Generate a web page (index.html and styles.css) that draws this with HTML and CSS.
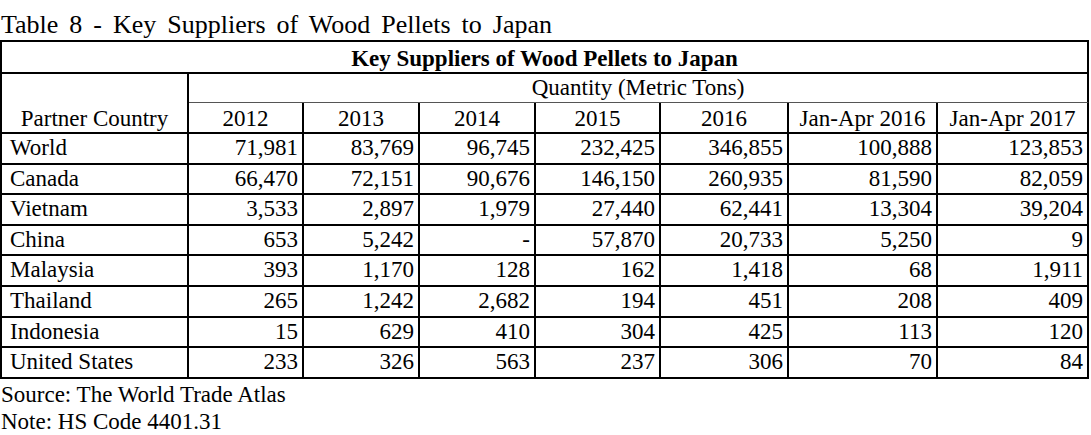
FILE: index.html
```html
<!DOCTYPE html>
<html>
<head>
<meta charset="utf-8">
<title>Table 8 - Key Suppliers of Wood Pellets to Japan</title>
<link rel="stylesheet" href="styles.css">
</head>
<body>
<div class="caption">Table 8 - Key Suppliers of Wood Pellets to Japan</div>
<table class="data">
  <colgroup>
    <col class="c1"><col class="c2"><col class="c3"><col class="c4"><col class="c5"><col class="c6"><col class="c7"><col class="c8">
  </colgroup>
  <tr class="r-title"><th colspan="8" class="title">Key Suppliers of Wood Pellets to Japan</th></tr>
  <tr class="r-qty"><td rowspan="2" class="partner">Partner Country</td><td colspan="7" class="qty">Quantity (Metric Tons)</td></tr>
  <tr class="r-years"><td class="yr">2012</td><td class="yr">2013</td><td class="yr">2014</td><td class="yr">2015</td><td class="yr">2016</td><td class="yr">Jan-Apr 2016</td><td class="yr">Jan-Apr 2017</td></tr>
  <tr class="r-data"><td class="name">World</td><td>71,981</td><td>83,769</td><td>96,745</td><td>232,425</td><td>346,855</td><td>100,888</td><td>123,853</td></tr>
  <tr class="r-data"><td class="name">Canada</td><td>66,470</td><td>72,151</td><td>90,676</td><td>146,150</td><td>260,935</td><td>81,590</td><td>82,059</td></tr>
  <tr class="r-data"><td class="name">Vietnam</td><td>3,533</td><td>2,897</td><td>1,979</td><td>27,440</td><td>62,441</td><td>13,304</td><td>39,204</td></tr>
  <tr class="r-data"><td class="name">China</td><td>653</td><td>5,242</td><td>-</td><td>57,870</td><td>20,733</td><td>5,250</td><td>9</td></tr>
  <tr class="r-data"><td class="name">Malaysia</td><td>393</td><td>1,170</td><td>128</td><td>162</td><td>1,418</td><td>68</td><td>1,911</td></tr>
  <tr class="r-data"><td class="name">Thailand</td><td>265</td><td>1,242</td><td>2,682</td><td>194</td><td>451</td><td>208</td><td>409</td></tr>
  <tr class="r-data"><td class="name">Indonesia</td><td>15</td><td>629</td><td>410</td><td>304</td><td>425</td><td>113</td><td>120</td></tr>
  <tr class="r-data"><td class="name">United States</td><td>233</td><td>326</td><td>563</td><td>237</td><td>306</td><td>70</td><td>84</td></tr>
</table>
<div class="notes">
  <div class="note">Source: The World Trade Atlas</div>
  <div class="note">Note: HS Code 4401.31</div>
</div>
</body>
</html>
```
FILE: styles.css
```css
html, body {
  margin: 0;
  padding: 0;
  background: #ffffff;
}
body {
  font-family: "Liberation Serif", "Times New Roman", serif;
  color: #000000;
  width: 1091px;
}
.caption {
  font-size: 26px;
  line-height: 29px;
  padding-top: 10px;
  padding-left: 1px;
  height: 30px;
  word-spacing: 4.5px;
  white-space: nowrap;
}
.data {
  border-collapse: separate;
  border-spacing: 0;
  table-layout: fixed;
  width: 1089px;
  border-top: 2px solid #000;
  border-left: 2px solid #000;
  font-size: 23px;
}
.c1 { width: 187px; }
.c2 { width: 115px; }
.c3 { width: 116px; }
.c4 { width: 116px; }
.c5 { width: 125px; }
.c6 { width: 128px; }
.c7 { width: 149px; }
.c8 { width: 151px; }
.data th,
.data td {
  box-sizing: border-box;
  border-right: 2px solid #000;
  border-bottom: 2px solid #000;
  padding: 0 4px 0 0;
  white-space: nowrap;
  overflow: hidden;
  text-align: right;
  font-weight: normal;
}
.r-title th {
  height: 32px;
  line-height: 27px;
  padding: 3px 0 0 0;
  text-align: center;
  font-weight: bold;
  vertical-align: top;
}
.r-qty td {
  height: 29px;
  line-height: 28px;
}
.data td.qty {
  text-align: center;
  padding: 0;
  border-bottom: 1px solid #555;
}
.data td.partner {
  text-align: center;
  vertical-align: bottom;
  padding: 0;
  line-height: 26px;
}
.r-years td {
  height: 31px;
  line-height: 26px;
  vertical-align: bottom;
}
.data td.yr {
  text-align: center;
  padding: 0;
}
.r-data td {
  height: 30.6px;
  line-height: 28.6px;
}
.data td.name {
  text-align: left;
  padding-left: 8px;
}
.notes {
  font-size: 23px;
  line-height: 27px;
  padding-top: 2px;
  padding-left: 1px;
}
```
